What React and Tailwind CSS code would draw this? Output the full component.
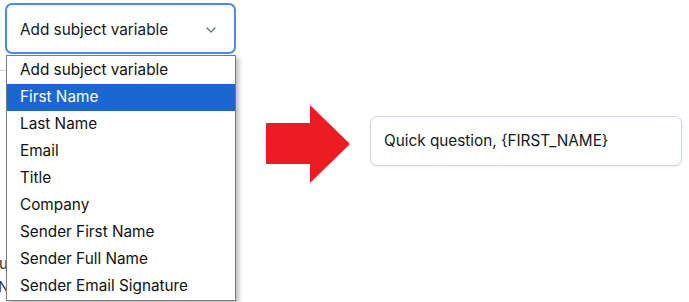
import { ChevronDown } from "lucide-react";

const OPTIONS = [
  "Add subject variable",
  "First Name",
  "Last Name",
  "Email",
  "Title",
  "Company",
  "Sender First Name",
  "Sender Full Name",
  "Sender Email Signature",
];

function SubjectSelect() {
  return (
    <div className="relative w-[236px]">
      <div className="mt-[3px] ml-[5px] flex h-[51px] items-center justify-between rounded-[7px] border-2 border-[#4a89f3] bg-white pl-[13px] pr-[15px] text-[15.3px] text-[#111827]">
        <span className="pt-[3px]">Add subject variable</span>
        <ChevronDown className="mt-[2px] h-4 w-4 text-[#6b7280]" strokeWidth={2} />
      </div>
      <ul className="absolute left-[6px] top-[55px] w-[230px] border border-[#7a7a7a] bg-white pt-[1px] text-[15.3px] text-[#111] shadow-[3px_3px_4px_rgba(0,0,0,0.25)]">
        {OPTIONS.map((opt, i) => (
          <li
            key={opt}
            className={`flex h-[27px] items-center pl-[13px] ${
              i === 1 ? "bg-[#1a67d2] text-white" : ""
            }`}
          >
            {opt}
          </li>
        ))}
      </ul>
    </div>
  );
}

function Arrow() {
  return (
    <svg width="84" height="78" viewBox="0 0 84 78" className="block">
      <polygon
        points="0,18 44,18 44,0 84,39 44,78 44,59 0,59"
        fill="#ed1c24"
      />
    </svg>
  );
}

export default function App() {
  return (
    <div
      className="relative h-[302px] w-[689px] overflow-hidden bg-white"
      style={{ fontFamily: "Inter, 'Noto Sans', sans-serif" }}
    >
      <div className="flex">
        <div className="flex flex-col">
          <SubjectSelect />
          <div className="mt-[16px] h-px w-[40px] bg-[#d4d4d4]" />
          <div className="mt-[181px] flex flex-col text-[15px] leading-[23px] text-[#333]">
            <span className="ml-[-1px]">u</span>
            <span className="ml-[-2px]">N</span>
          </div>
        </div>
        <div className="ml-[30px] mt-[105px] flex items-start">
          <Arrow />
          <div className="ml-[20px] mt-[11px] flex h-[50px] w-[312px] items-center rounded-[7px] border border-[#c9d4e4] bg-white px-[13px] text-[15.3px] text-[#111827] shadow-[0_1px_2px_rgba(0,0,0,0.06)]">
            Quick question, {"{FIRST_NAME}"}
          </div>
        </div>
      </div>
    </div>
  );
}
